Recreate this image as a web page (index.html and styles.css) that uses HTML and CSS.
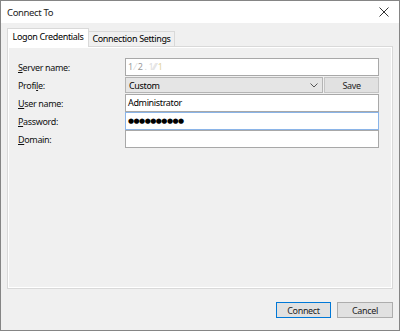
FILE: index.html
```html
<!DOCTYPE html>
<html lang="en">
<head>
    <meta charset="UTF-8">
    <title>Connect To</title>
    <link rel="stylesheet" href="styles.css">
</head>
<body>
    <div class="window">
        <div class="titlebar">
            <span class="title">Connect To</span>
            <svg class="close" width="10" height="10" viewBox="0 0 10 10">
                <path d="M0.5 0.5 L9.5 9.5 M9.5 0.5 L0.5 9.5" stroke="#333" stroke-width="1" fill="none"/>
            </svg>
        </div>
        <div class="body">
            <div class="tabs">
                <div class="tab active">Logon Credentials</div>
                <div class="tab">Connection Settings</div>
            </div>
            <div class="panel">
                <div class="form">
                    <label class="label"><u>S</u>erver name:</label>
                    <div class="field server">
                        <span class="s1">1</span><span class="s2">⁄</span><span class="s3">2</span><span class="s2">.</span><span class="s4">1⁄⁄⁄</span><span class="s5">1</span>
                    </div>

                    <label class="label">Profi<u>l</u>e:</label>
                    <div class="combo-row">
                        <div class="combo">
                            <span>Custom</span>
                            <svg class="chevron" width="8" height="5" viewBox="0 0 8 5">
                                <path d="M0.5 0.5 L4 4 L7.5 0.5" stroke="#555" stroke-width="1" fill="none"/>
                            </svg>
                        </div>
                        <div class="btn save">Save</div>
                    </div>

                    <label class="label"><u>U</u>ser name:</label>
                    <div class="field">Administrator</div>

                    <label class="label"><u>P</u>assword:</label>
                    <div class="field focused"><span class="dots">●●●●●●●●●●</span></div>

                    <label class="label"><u>D</u>omain:</label>
                    <div class="field"></div>
                </div>
            </div>
            <div class="footer">
                <div class="btn primary">Connect</div>
                <div class="btn">Cancel</div>
            </div>
        </div>
    </div>
</body>
</html>
```

FILE: styles.css
```css
body {
    margin: 0;
    font-family: "Noto Sans", "Open Sans", sans-serif;
    font-size: 9px;
    letter-spacing: -0.35px;
    color: #000;
}
.window {
    width: 400px;
    height: 331px;
    box-sizing: border-box;
    border: 1px solid #858585;
    display: flex;
    flex-direction: column;
    background: #f0f0f0;
}
.titlebar {
    height: 22px;
    background: #fff;
    display: flex;
    align-items: center;
    justify-content: space-between;
    padding: 0 10px 0 6px;
}
.title {
    color: #222;
    font-size: 9.5px;
}
.body {
    flex: 1;
    display: flex;
    flex-direction: column;
    padding: 5px 6px 12px 6px;
}
.tabs {
    display: flex;
    align-items: flex-end;
    height: 18px;
}
.tab {
    width: 86px;
    height: 15px;
    box-sizing: border-box;
    border: 1px solid #d9d9d9;
    border-bottom: none;
    border-left: none;
    text-align: center;
    line-height: 14px;
    background: #f0f0f0;
}
.tab.active {
    width: 82px;
    height: 19px;
    margin-bottom: -1px;
    border-left: 1px solid #d9d9d9;
    background: #fff;
    line-height: 16px;
    position: relative;
}
.panel {
    flex: 1;
    border: 1px solid #d9d9d9;
    box-shadow: inset 0 0 0 1px #fff;
    padding: 11px 13px 0 10px;
}
.form {
    display: grid;
    grid-template-columns: 107px 1fr;
    grid-auto-rows: 18px;
    align-items: center;
}
.label {
    color: #111;
}
.field {
    height: 18px;
    box-sizing: border-box;
    border: 1px solid #a8a8a8;
    background: #fff;
    padding: 0 2px;
    line-height: 16px;
}
.field.focused {
    border-color: #8ab4e8;
}
.server span {
    margin-right: 2px;
}
.server .s1 { color: #a0a0a0; }
.server .s2 { color: #d8d8d8; }
.server .s3 { color: #989898; }
.server .s4 { color: #dcdcdc; }
.server .s5 { color: #e2d4a0; }
.dots {
    font-family: "DejaVu Sans", sans-serif;
    font-size: 7px;
    letter-spacing: -0.55px;
    vertical-align: 1px;
}
.combo-row {
    display: flex;
    height: 16px;
}
.combo {
    flex: 1;
    box-sizing: border-box;
    border: 1px solid #b4b4b4;
    background: #e5e5e5;
    display: flex;
    align-items: center;
    justify-content: space-between;
    padding: 0 4px 0 3px;
}
.btn {
    box-sizing: border-box;
    border: 1px solid #adadad;
    background: #e1e1e1;
    display: flex;
    align-items: center;
    justify-content: center;
    color: #222;
}
.save {
    width: 55px;
    margin-left: 1px;
    border-color: #c4c4c4;
}
.footer {
    margin-top: 13px;
    display: flex;
    justify-content: flex-end;
    gap: 6px;
    height: 16px;
}
.footer .btn {
    width: 56px;
}
.btn.primary {
    width: 55px;
    border-color: #0078d7;
    box-shadow: inset 0 0 0 1px #e1e1e1;
}
```
